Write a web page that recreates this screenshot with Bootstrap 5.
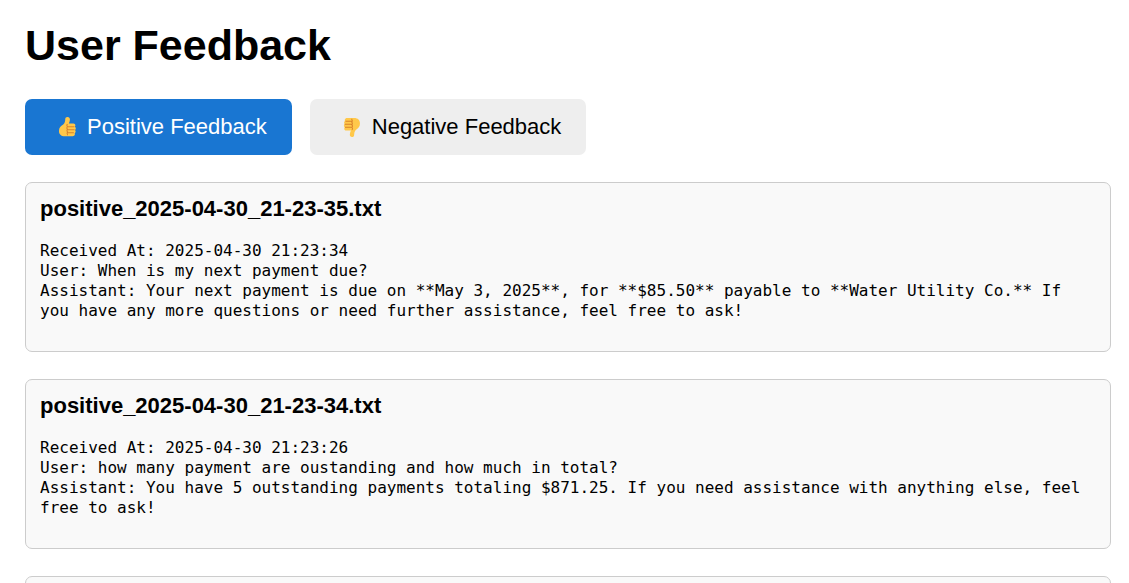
<!DOCTYPE html>
<html lang="en">
<head>
<meta charset="utf-8">
<meta name="viewport" content="width=device-width, initial-scale=1">
<title>User Feedback</title>
<link rel="stylesheet" href="https://cdn.jsdelivr.net/npm/bootstrap@5.3.0/dist/css/bootstrap.min.css">
<style>
  body { font-family: "Liberation Sans", Arial, sans-serif; color: #000; background: #fff; }
  .feedback-page { padding: 20px 18px 0 25px; }
  .page-title { font-size: 43px; line-height: 50px; margin-bottom: 29px; }
  .feedback-tabs { gap: 18px; margin-bottom: 27px; }
  .btn-filter {
    --bs-btn-font-size: 22px;
    --bs-btn-line-height: 26px;
    --bs-btn-padding-x: 25px;
    --bs-btn-padding-y: 15px;
    --bs-btn-border-width: 0;
    --bs-btn-border-radius: 7px;
    --bs-btn-color: #000;
    --bs-btn-bg: #eee;
    --bs-btn-hover-color: #000;
    --bs-btn-hover-bg: #e2e2e2;
    --bs-btn-active-color: #fff;
    --bs-btn-active-bg: #1976d2;
    display: flex;
    align-items: center;
    gap: 9px;
  }
  .thumb { width: 28px; height: 26px; }
  .feedback-list { gap: 27px; }
  .feedback-card {
    --bs-card-bg: #f9f9f9;
    --bs-card-border-color: #ccc;
    --bs-card-border-radius: 7px;
    --bs-card-color: #000;
    --bs-card-spacer-x: 14px;
    --bs-card-spacer-y: 13px;
  }
  .file-name { font-size: 22px; line-height: 26px; margin-bottom: 19px; }
  .transcript {
    font-family: "DejaVu Sans Mono", monospace;
    font-size: 16px;
    line-height: 20px;
    white-space: pre-wrap;
    margin-bottom: 17px;
  }
</style>
</head>
<body>
<svg class="d-none" aria-hidden="true">
  <symbol id="thumb-up" viewBox="-3 0 30 28">
    <path fill="#ffc84a" d="M15.6 3.2c1.7-.2 2.8 1 2.8 2.7 0 1.600-.5 3-1.200 4.300h4.900c1.600 0 2.400 1.200 2.100 2.400-.1.500-.3.800-.6 1.100.9.500 1.200 1.300 1.100 2.100-.1.700-.4 1.200-.9 1.500.6.500.8 1.100.7 1.800-.1.700-.4 1.200-1 1.500.3.500.4 1 .2 1.600-.3 1.100-1.200 1.700-2.500 1.700h-8.300c-4.200 0-6.300-2.300-6.300-5.700 0-3.500 1.700-5.100 3.800-6.400 1.600-1 2.600-2.400 2.800-4.500l.2-2.100c.1-1.200.9-1.900 2.200-2z"/>
    <path fill="none" stroke="#d9822b" stroke-width="1.100" d="M15.800 10.800c-1.200 1-.8 2.100 0 2.700-1.100 1-.9 2.200 0 2.900-.9 1-.8 2.100 0 2.800-.7.900-.6 2.200.2 3.600M15.800 13.700h7.400M15.800 16.900h7.600M15.800 20.100h6.800"/>
  </symbol>
  <symbol id="thumb-down" viewBox="-3 0 30 28">
    <path fill="#ffc84a" d="M15.600 24.800c-1.700.2-2.900-.9-2.700-2.700.1-1.400.5-2.700 1.200-4.300H9.200c-1.600 0-2.500-1.100-2.300-2.300.1-.5.300-.9.700-1.200-.9-.5-1.200-1.200-1.100-2 .1-.7.400-1.200.9-1.500-.6-.5-.8-1.100-.7-1.800.1-.7.500-1.200 1-1.500-.3-.5-.4-1-.2-1.600.3-1.100 1.200-1.700 2.500-1.700h7.500c4.200 0 6.300 2.300 6.300 5.700 0 3.500-1.600 5.100-3.500 6.400-1.500 1-2.300 2.400-2.600 4.500l-.2 2c-.2 1.200-.8 1.900-1.900 2z"/>
    <path fill="none" stroke="#d9822b" stroke-width="1.100" d="M15 17.200c1.200-1 .8-2.100 0-2.700 1.100-1 .9-2.200 0-2.900.9-1 .8-2.100 0-2.800.7-.9.600-2.200-.2-3.600M15 14.300H7.600M15 11.100H7.400M15 7.900H8.200"/>
  </symbol>
</svg>
<main class="feedback-page">
  <h1 class="page-title fw-bold">User Feedback</h1>
  <div class="feedback-tabs d-flex flex-wrap">
    <button type="button" class="btn btn-filter active" aria-pressed="true">
      <svg class="thumb" aria-hidden="true"><use href="#thumb-up"/></svg>Positive Feedback
    </button>
    <button type="button" class="btn btn-filter" aria-pressed="false">
      <svg class="thumb" aria-hidden="true"><use href="#thumb-down"/></svg>Negative Feedback
    </button>
  </div>
  <section class="feedback-list d-flex flex-column">
    <article class="card feedback-card">
      <div class="card-body">
        <h3 class="file-name fw-bold">positive_2025-04-30_21-23-35.txt</h3>
        <pre class="transcript">Received At: 2025-04-30 21:23:34
User: When is my next payment due?
Assistant: Your next payment is due on **May 3, 2025**, for **$85.50** payable to **Water Utility Co.** If you have any more questions or need further assistance, feel free to ask!</pre>
      </div>
    </article>
    <article class="card feedback-card">
      <div class="card-body">
        <h3 class="file-name fw-bold">positive_2025-04-30_21-23-34.txt</h3>
        <pre class="transcript">Received At: 2025-04-30 21:23:26
User: how many payment are oustanding and how much in total?
Assistant: You have 5 outstanding payments totaling $871.25. If you need assistance with anything else, feel free to ask!</pre>
      </div>
    </article>
    <article class="card feedback-card">
      <div class="card-body"></div>
    </article>
  </section>
</main>
<script src="https://cdn.jsdelivr.net/npm/bootstrap@5.3.0/dist/js/bootstrap.bundle.min.js"></script>
</body>
</html>
